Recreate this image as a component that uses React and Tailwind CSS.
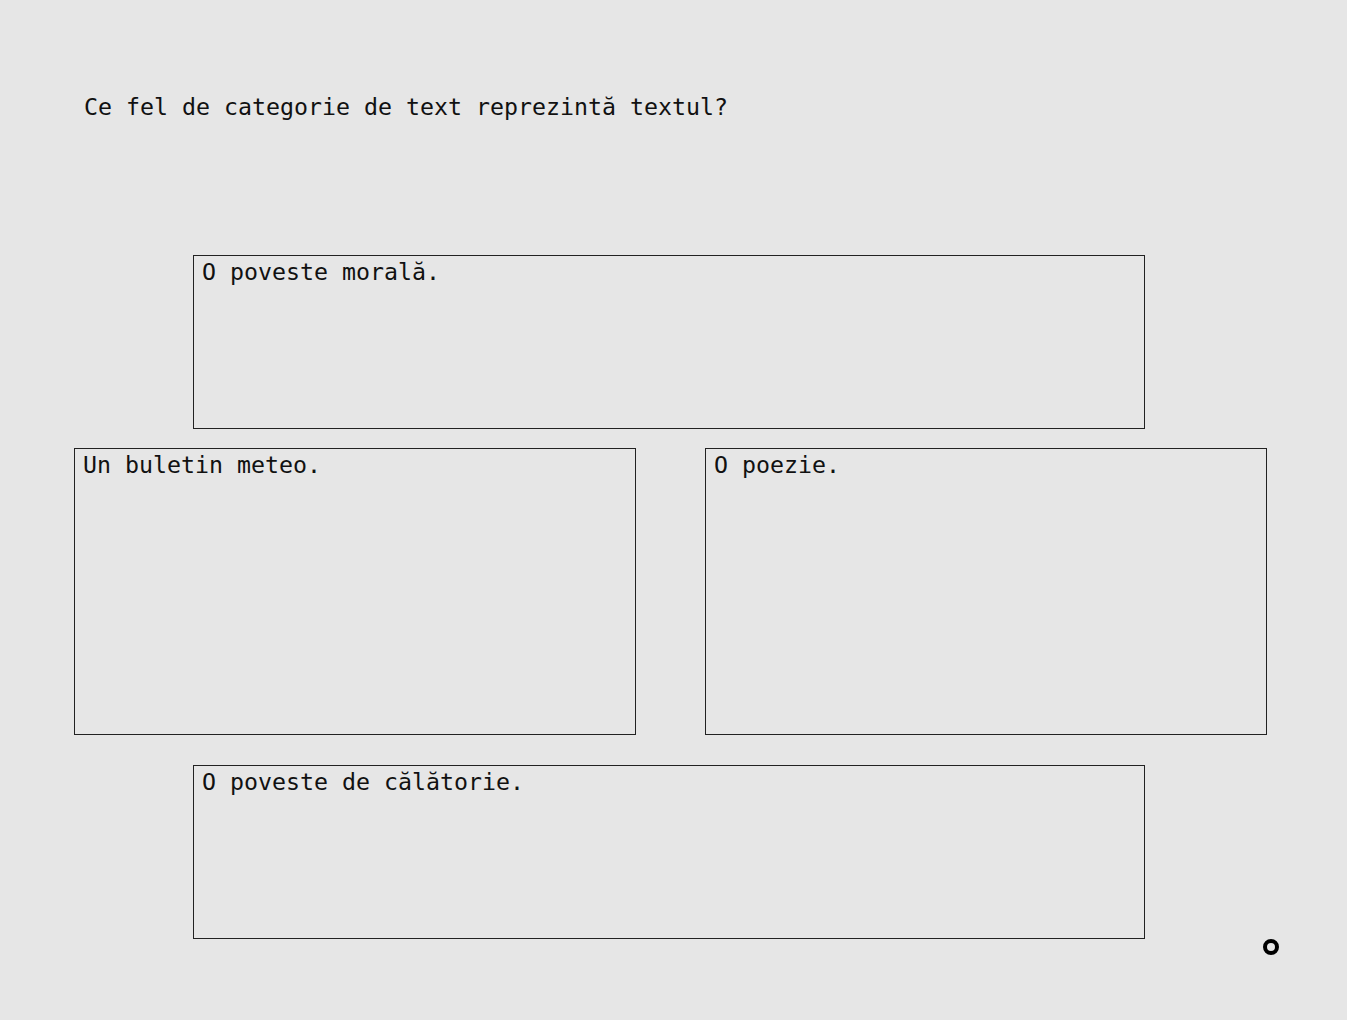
export default function App() {
  const mono = { fontFamily: '"DejaVu Sans Mono", "Liberation Mono", monospace' };
  return (
    <div className="relative w-[1347px] h-[1020px] bg-[#e6e6e6] text-[#111]" style={mono}>
      <div className="pl-[84px] pt-[92px] text-[23.25px] leading-[30px]">
        Ce fel de categorie de text reprezintă textul?
      </div>

      <div className="ml-[74px] w-[1193px] mt-[133px] flex flex-col">
        <div className="ml-[119px] w-[952px] h-[174px] border border-[#222] px-[8px] pt-[1px] text-[23.25px] leading-[30px]">
          O poveste morală.
        </div>

        <div className="mt-[19px] flex gap-[69px]">
          <div className="w-[562px] h-[287px] border border-[#222] px-[8px] pt-[1px] text-[23.25px] leading-[30px]">
            Un buletin meteo.
          </div>
          <div className="w-[562px] h-[287px] border border-[#222] px-[8px] pt-[1px] text-[23.25px] leading-[30px]">
            O poezie.
          </div>
        </div>

        <div className="mt-[30px] ml-[119px] w-[952px] h-[174px] border border-[#222] px-[8px] pt-[1px] text-[23.25px] leading-[30px]">
          O poveste de călătorie.
        </div>
      </div>

      <div className="absolute left-[1263px] top-[939px] w-[16px] h-[16px] rounded-full border-[4px] border-black" />
    </div>
  );
}
